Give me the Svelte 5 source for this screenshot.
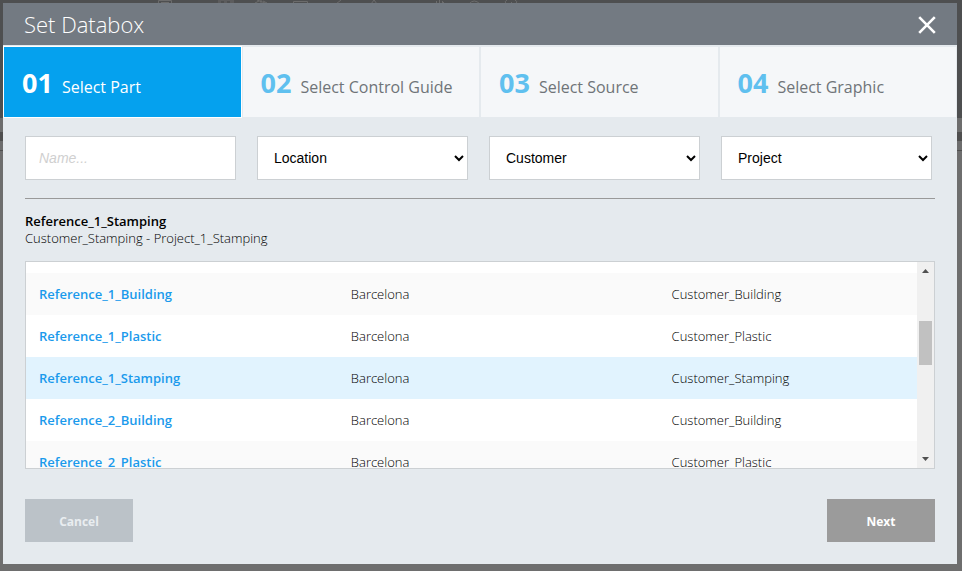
<script>
    let steps = [
        { number: "01", title: "Select Part" },
        { number: "02", title: "Select Control Guide" },
        { number: "03", title: "Select Source" },
        { number: "04", title: "Select Graphic" }
    ];

    let filters = ["Location", "Customer", "Project"];

    let parts = [
        { name: "Reference_1_Building", location: "Barcelona", customer: "Customer_Building" },
        { name: "Reference_1_Plastic", location: "Barcelona", customer: "Customer_Plastic" },
        { name: "Reference_1_Stamping", location: "Barcelona", customer: "Customer_Stamping" },
        { name: "Reference_2_Building", location: "Barcelona", customer: "Customer_Building" },
        { name: "Reference_2_Plastic", location: "Barcelona", customer: "Customer_Plastic" }
    ];

    let activeStep = 0;
    let selected = "Reference_1_Stamping";
    let name = "";
</script>

<div class="page">
    <div class="backdrop" aria-hidden="true">
        <div class="toolbar">
            <svg width="400" height="10" viewBox="0 0 400 10" fill="none" stroke="#6b6b6b">
                <path d="M8.500 10V.5h13V10M11 2.500h8" />
                <path d="M68 0h16M68 2h3M74 2h3M80 2h4" />
                <path d="M111 0v3M105 3l4-2M113 1l4 2M107 0l8 3" />
                <path d="M143.500 10V1.500h14V10M146 3.500h9" />
                <path d="M186 4l5-4M221 4l3-4 3 4" />
                <path d="M286.500 4V1M289.500 4V0M292.500 4V1M295 4l-2-2" />
                <path d="M319 4q5-6 11 0M356 4q-2-3 1-4M366 4q2-3-1-4M361.500 2v2" />
            </svg>
        </div>
        <div class="strip"></div>
        <div class="divider"></div>
        <div class="strip low"></div>
    </div>

    <div class="modal" role="dialog" aria-labelledby="modal-title">
        <header>
            <h1 id="modal-title">Set Databox</h1>
            <button class="close" type="button" aria-label="Close">
                <svg width="18" height="18" viewBox="0 0 18 18" stroke="#fff" stroke-width="2.600">
                    <path d="M1.200 1.200l15.600 15.600M16.800 1.200L1.200 16.800" />
                </svg>
            </button>
        </header>

        <nav>
            {#each steps as step, i}
                <button
                    type="button"
                    class="step"
                    class:active={i === activeStep}
                    on:click={() => (activeStep = i)}>
                    <span class="number">{step.number}</span>
                    <span class="title">{step.title}</span>
                </button>
            {/each}
        </nav>

        <div class="content">
            <div class="filters">
                <input type="text" placeholder="Name..." aria-label="Name" bind:value={name} />
                {#each filters as filter}
                    <select aria-label={filter}>
                        <option>{filter}</option>
                    </select>
                {/each}
            </div>

            <div class="summary">
                <h2>Reference_1_Stamping</h2>
                <p>Customer_Stamping - Project_1_Stamping</p>
            </div>

            <div class="list">
                <div class="rows">
                    <table>
                        <tbody>
                            {#each parts as part}
                                <tr
                                    class:selected={part.name === selected}
                                    on:click={() => (selected = part.name)}>
                                    <td class="name">{part.name}</td>
                                    <td class="location">{part.location}</td>
                                    <td>{part.customer}</td>
                                </tr>
                            {/each}
                        </tbody>
                    </table>
                </div>
                <div class="scrollbar" aria-hidden="true">
                    <svg width="7" height="4" viewBox="0 0 7 4"><path d="M0 4h7L3.500 0z" fill="#505050" /></svg>
                    <div class="track"><div class="thumb"></div></div>
                    <svg width="7" height="4" viewBox="0 0 7 4"><path d="M0 0h7L3.500 4z" fill="#505050" /></svg>
                </div>
            </div>

            <footer>
                <button class="action cancel" type="button">Cancel</button>
                <button class="action" type="button">Next</button>
            </footer>
        </div>
    </div>
</div>

<style>
    :global(body) {
        margin: 0;
        background: #6e6e6e;
        font-family: "Open Sans", sans-serif;
    }

    .page {
        position: relative;
        box-sizing: border-box;
        min-height: 100vh;
        padding: 3px 5px 7px 3px;
    }

    .backdrop {
        position: absolute;
        inset: 0;
        overflow: hidden;
    }

    .toolbar {
        height: 118px;
        padding-left: 150px;
        background: #4e4f50;
    }

    .toolbar svg {
        display: block;
    }

    .strip {
        height: 14px;
        background: #6d6d6d;
    }

    .divider {
        height: 9px;
        background: #4f4f4f;
    }

    .strip.low {
        height: 9px;
        border-bottom: 1px solid #4f4f4f;
    }

    .modal {
        position: relative;
        background: #e5eaee;
    }

    header {
        display: flex;
        align-items: center;
        justify-content: space-between;
        height: 42px;
        padding: 0 21px;
        background: #737a82;
    }

    h1 {
        margin: 0;
        color: #fff;
        font-size: 22px;
        font-weight: 300;
        line-height: 42px;
    }

    button {
        border: 0;
        font-family: inherit;
        cursor: pointer;
    }

    .close {
        display: flex;
        padding: 0;
        margin-top: 2px;
        background: none;
    }

    nav {
        display: grid;
        grid-template-columns: repeat(4, 1fr);
        gap: 2px;
        padding: 2px 1px 0;
    }

    .step {
        display: flex;
        align-items: baseline;
        gap: 9px;
        height: 70px;
        padding: 0 18px;
        background: #f5f7f9;
        color: #6f7478;
        text-align: left;
        line-height: 72px;
        white-space: nowrap;
    }

    .step .number {
        color: #5fc0ef;
        font-size: 27px;
        font-weight: 700;
    }

    .step .title {
        font-size: 16px;
    }

    .step.active {
        background: #05a1ee;
        box-shadow: 0 0 0 1px #fff;
    }

    .step.active .number,
    .step.active .title {
        color: #fff;
    }

    .content {
        padding: 19px 22px 22px;
    }

    .filters {
        display: grid;
        grid-template-columns: repeat(4, 1fr);
        gap: 21px;
        padding: 0 3px 18px 0;
    }

    input,
    select {
        box-sizing: border-box;
        width: 100%;
        height: 44px;
        padding: 0 13px;
        border: 1px solid #ccd0d3;
        border-radius: 0;
        background: #fff;
        color: #000;
        font-family: "Liberation Sans", Arial, sans-serif;
        font-size: 14px;
    }

    select {
        padding: 0 0 0 12px;
    }

    input::placeholder {
        color: #d0d0d0;
        font-style: italic;
    }

    .summary {
        padding: 14px 0;
        border-top: 1px solid #999;
        font-size: 13px;
        line-height: 17px;
    }

    h2,
    p {
        margin: 0;
        font-size: 13px;
    }

    h2 {
        font-weight: 600;
    }

    p {
        font-weight: 300;
    }

    .list {
        display: flex;
        border: 1px solid #ccd0d3;
        background: #fff;
    }

    .rows {
        flex: 1;
        height: 206px;
        overflow: hidden;
    }

    table {
        width: 100%;
        margin-top: 11px;
        border-collapse: collapse;
        table-layout: fixed;
        font-size: 13px;
        font-weight: 300;
    }

    td {
        height: 42px;
        padding: 0 13px;
    }

    tr:nth-child(odd) {
        background: #fafafa;
    }

    tr.selected {
        background: #e1f3fe;
    }

    .name {
        width: 35%;
        box-sizing: border-box;
        color: #1b9aec;
        font-weight: 600;
    }

    .location {
        width: 36%;
        box-sizing: border-box;
    }

    .scrollbar {
        display: flex;
        flex-direction: column;
        align-items: center;
        box-sizing: border-box;
        width: 17px;
        padding: 7px 0;
        background: #f0f0f0;
    }

    .track {
        flex: 1;
        width: 13px;
        padding-top: 48px;
    }

    .thumb {
        height: 44px;
        background: #c1c1c1;
    }

    footer {
        display: flex;
        justify-content: space-between;
        padding-top: 30px;
    }

    .action {
        width: 108px;
        height: 43px;
        padding: 2px 0 0;
        background: #9b9b9b;
        color: #fff;
        font-size: 12px;
        font-weight: 700;
    }

    .cancel {
        background: #bbc2c8;
        color: #e9edf0;
    }
</style>
